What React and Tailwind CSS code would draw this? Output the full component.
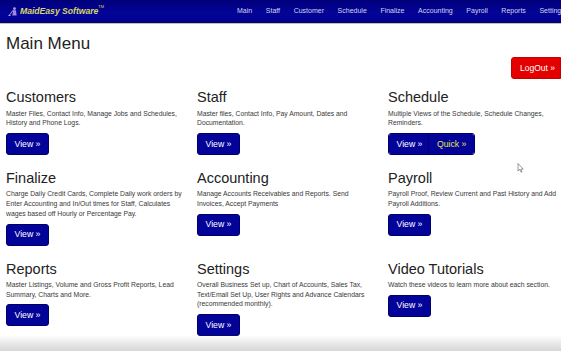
import React from "react";

const navItems = ["Main", "Staff", "Customer", "Schedule", "Finalize", "Accounting", "Payroll", "Reports", "Settings"];

const sections = [
  { title: "Customers", desc: "Master Files, Contact Info, Manage Jobs and Schedules, History and Phone Logs." },
  { title: "Staff", desc: "Master files, Contact Info, Pay Amount, Dates and Documentation." },
  { title: "Schedule", desc: "Multiple Views of the Schedule, Schedule Changes, Reminders.", quick: true },
  { title: "Finalize", desc: "Charge Daily Credit Cards, Complete Daily work orders by Enter Accounting and In/Out times for Staff, Calculates wages based off Hourly or Percentage Pay." },
  { title: "Accounting", desc: "Manage Accounts Receivables and Reports. Send Invoices, Accept Payments" },
  { title: "Payroll", desc: "Payroll Proof, Review Current and Past History and Add Payroll Additions." },
  { title: "Reports", desc: "Master Listings, Volume and Gross Profit Reports, Lead Summary, Charts and More." },
  { title: "Settings", desc: "Overall Business Set up, Chart of Accounts, Sales Tax, Text/Email Set Up, User Rights and Advance Calendars (recommended monthly)." },
  { title: "Video Tutorials", desc: "Watch these videos to learn more about each section." },
];

function Logo() {
  return (
    <div className="flex items-center">
      <svg width="11" height="9" viewBox="0 0 11 9" className="mr-[1px]">
        <circle cx="6.5" cy="1.6" r="1.4" fill="#a89ae6" />
        <path d="M5.2 3.2 L8 3.2 L8.6 8.5 L4.2 8.5 Z" fill="#9a8ad8" />
        <path d="M1 8.6 L5.5 2.8" stroke="#c0b4f0" strokeWidth="0.9" />
        <path d="M0.5 8.7 L2.6 8.7" stroke="#c0b4f0" strokeWidth="1" />
      </svg>
      <span className="text-[8.7px] font-bold italic text-[#d8d864] tracking-[-0.05px]">MaidEasy Software</span>
      <span className="text-[4px] text-[#d8d864] self-start mt-[-1px]">TM</span>
    </div>
  );
}

function ViewButton() {
  return (
    <button className="h-[22px] px-[7.5px] rounded-[3px] bg-[#03039a] border border-[#00006a] text-white text-[8.7px] leading-none">
      View »
    </button>
  );
}

export default function App() {
  return (
    <div className="relative w-[561px] h-[351px] overflow-hidden bg-white font-['Liberation_Sans',Arial,sans-serif]">
      <header className="h-[24px] flex items-center bg-linear-to-b from-[#00007a] via-[#030396] to-[#020290] border-b border-[#c9c38a] whitespace-nowrap overflow-hidden">
        <div className="w-[237px] shrink-0 pl-[8px] flex items-center">
          <Logo />
        </div>
        <nav className="flex gap-[13.6px] text-[7px] text-[#d4d4ec] shrink-0">
          {navItems.map((n) => (
            <span key={n}>{n}</span>
          ))}
        </nav>
      </header>

      <main className="px-[6px]">
        <h1 className="mt-[10px] text-[17px] leading-[20px] text-[#222]">Main Menu</h1>
        <div className="flex justify-end mt-[3px] mr-[-6px]">
          <button className="h-[22px] w-[50px] pl-[8px] text-left rounded-l-[3px] bg-[#e50000] border border-[#c40000] text-white text-[8.5px] leading-none">
            LogOut »
          </button>
        </div>
        <div className="grid grid-cols-[180px_180px_180px] gap-x-[11px] gap-y-[15px] mt-[10px]">
          {sections.map((s) => (
            <div key={s.title}>
              <h2 className="text-[14.5px] leading-[16px] text-[#222]">{s.title}</h2>
              <p className="mt-[3.5px] text-[6.8px] leading-[9.7px] text-[#383838]">{s.desc}</p>
              <div className="mt-[5px] flex">
                {s.quick ? (
                  <div className="flex h-[22px] rounded-[3px] overflow-hidden border border-[#00006a] text-[8.7px] leading-none">
                    <span className="w-[40px] pl-[7.5px] flex items-center bg-[#03039a] text-white border-r border-[#000070]">View »</span>
                    <span className="w-[45px] pl-[8px] flex items-center bg-[#03039a] text-[#e4e44a]">Quick »</span>
                  </div>
                ) : (
                  <ViewButton />
                )}
              </div>
            </div>
          ))}
        </div>
      </main>

      <svg className="absolute left-[517px] top-[163px]" width="7" height="10" viewBox="0 0 7 10">
        <path d="M1 0.5 L1 8 L2.8 6.4 L4 9.2 L5 8.8 L3.9 6.1 L6.2 6.1 Z" fill="#fff" stroke="#555" strokeWidth="0.6" />
      </svg>

      <div className="pointer-events-none absolute left-0 right-0 bottom-0 h-[16px] bg-linear-to-b from-[#ffffff00] to-[#d6d6d6]" />
    </div>
  );
}
